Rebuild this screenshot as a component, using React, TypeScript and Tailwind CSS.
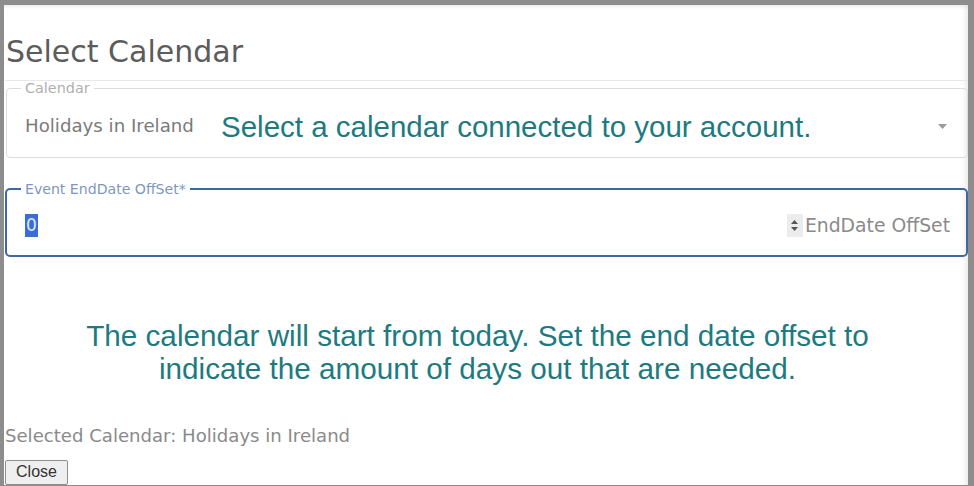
import React from "react";

const gothic = { fontFamily: '"DejaVu Sans", "Liberation Sans", sans-serif' } as React.CSSProperties;
const arial = { fontFamily: '"Liberation Sans", Arial, sans-serif' } as React.CSSProperties;

export default function App() {
  return (
    <div className="w-[974px] h-[486px] bg-[#8d8d8d] pt-[5px] pl-[4px] pr-[6px] pb-[1px] flex overflow-hidden">
      <div className="flex-1 bg-white flex flex-col overflow-hidden pl-[1px] shadow-[inset_-6px_0_6px_-4px_rgba(0,0,0,0.10),inset_0_4px_4px_-3px_rgba(0,0,0,0.10)]">
        {/* Title */}
        <div className="h-[76px] shrink-0 pt-[30px] pl-[1px] border-b border-[#e8e8e8]">
          <h1 style={gothic} className="text-[30px] leading-[34px] text-[#5c5c5c] font-normal">
            Select Calendar
          </h1>
        </div>

        {/* Calendar select */}
        <fieldset className="ml-[1px] shrink-0 border border-[#dcdcdc] rounded-[4px] px-[14px]">
          <legend style={gothic} className="px-[4px] text-[14.4px] leading-[14px] text-[#b0b0b0]">
            Calendar
          </legend>
          <div className="h-[62px] flex items-center pl-[4px]">
            <span style={gothic} className="w-[196px] shrink-0 text-[18.2px] leading-[20px] text-[#7a7a7a] whitespace-nowrap">
              Holidays in Ireland
            </span>
            <span style={arial} className="text-[29.5px] leading-[33px] text-[#1d7a80] whitespace-nowrap">
              Select a calendar connected to your account.
            </span>
            <svg className="ml-auto mr-[6px]" width="9" height="5" viewBox="0 0 9 5">
              <path d="M0 0 L9 0 L4.5 5 Z" fill="#9a9a9a" />
            </svg>
          </div>
        </fieldset>

        {/* EndDate offset */}
        <fieldset className="mt-[24px] shrink-0 border-2 border-[#3d69a3] rounded-[5px] px-[14px]">
          <legend style={gothic} className="px-[4px] text-[14.1px] leading-[14px] text-[#7d97bf]">
            Event EndDate OffSet*
          </legend>
          <div className="h-[59px] flex items-center pl-[4px] pr-[2px]">
            <span style={gothic} className="bg-[#3a6ed6] text-[#dfe8ff] text-[17px] leading-[23px] px-[1px]">
              0
            </span>
            <div className="ml-auto flex items-center">
              <div className="w-[16px] h-[23px] bg-[#ececec] flex flex-col items-center justify-center gap-[3px]">
                <svg width="7" height="4" viewBox="0 0 7 4">
                  <path d="M0 4 L3.5 0 L7 4 Z" fill="#555" />
                </svg>
                <svg width="7" height="4" viewBox="0 0 7 4">
                  <path d="M0 0 L7 0 L3.5 4 Z" fill="#555" />
                </svg>
              </div>
              <span style={gothic} className="ml-[2px] text-[18.8px] leading-[23px] text-[#8a8a8a] whitespace-nowrap">
                EndDate OffSet
              </span>
            </div>
          </div>
        </fieldset>

        {/* Info text */}
        <p style={arial} className="mt-[62px] pr-[18px] text-center text-[29.7px] leading-[33px] text-[#1d7a80]">
          The calendar will start from today. Set the end date offset to
          <br />
          indicate the amount of days out that are needed.
        </p>

        <div style={gothic} className="mt-[41px] text-[18.1px] leading-[20px] text-[#8a8a8a] whitespace-nowrap">
          Selected Calendar: Holidays in Ireland
        </div>

        <div className="mt-[13px]">
          <button
            style={arial}
            className="w-[63px] h-[25px] border border-[#8f8f8f] rounded-[2px] bg-[#efefef] text-[16px] leading-[20px] text-[#333]"
          >
            Close
          </button>
        </div>
      </div>
    </div>
  );
}
